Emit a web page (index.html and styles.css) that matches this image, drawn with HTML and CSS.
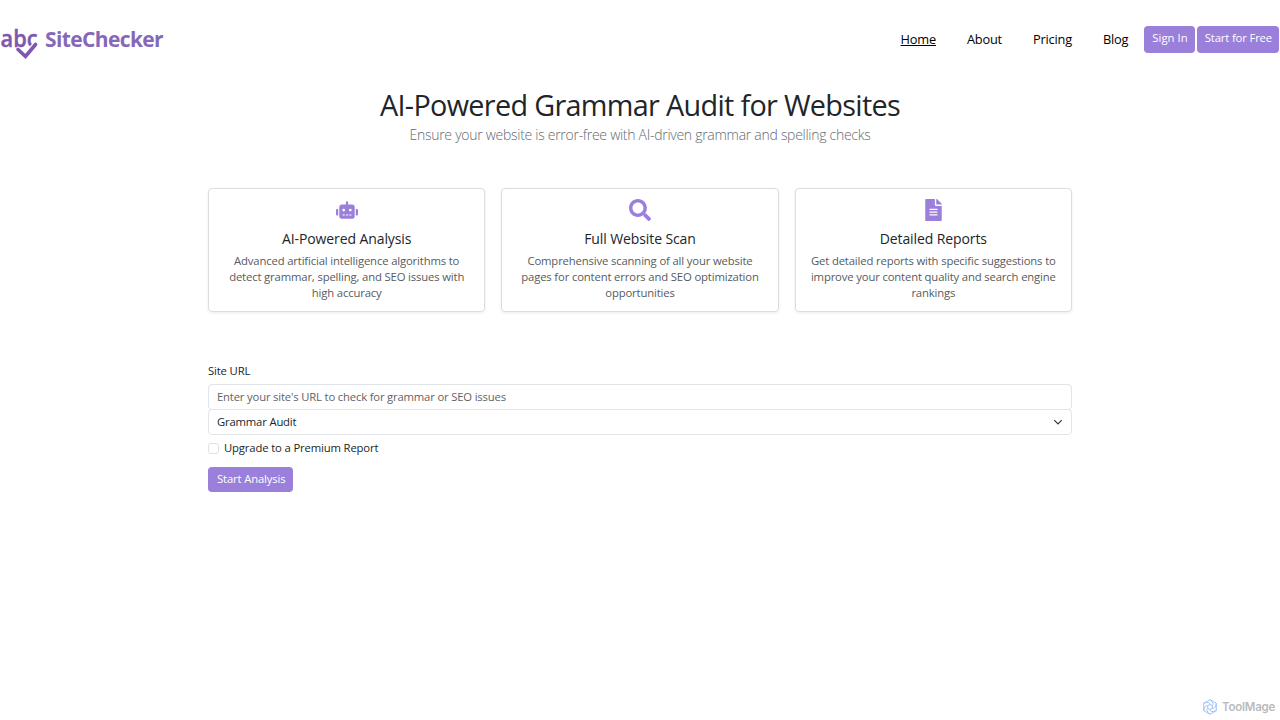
FILE: index.html
```html
<!DOCTYPE html>
<html lang="en">
<head>
  <meta charset="UTF-8" />
  <meta name="viewport" content="width=device-width, initial-scale=1.0"/>
  <title>SiteChecker</title>
  <link rel="stylesheet" href="styles.css">
</head>
<body>

  <header class="navbar">
    <a class="brand" href="#">
      <svg class="brand-icon" viewBox="0 0 38 34" width="38" height="34">
        <text class="brand-abc" x="0.500" y="21" textLength="37" lengthAdjust="spacingAndGlyphs">abc</text>
        <path class="check-gap" d="M18 24l7.500 7L36.500 18"/>
        <path class="check" d="M18 23.500l7.500 7L35.500 18.500"/>
      </svg>
      <span class="brand-name">SiteChecker</span>
    </a>
    <nav class="nav-links">
      <a class="active" href="#">Home</a>
      <a href="#">About</a>
      <a href="#">Pricing</a>
      <a href="#">Blog</a>
    </nav>
    <div class="nav-buttons">
      <a class="btn btn-signin" href="#">Sign In</a>
      <a class="btn" href="#">Start for Free</a>
    </div>
  </header>

  <main class="container">
    <h1>AI-Powered Grammar Audit for Websites</h1>
    <p class="lead">Ensure your website is error-free with AI-driven grammar and spelling checks</p>

    <div class="features">
      <div class="card">
        <svg class="icon" viewBox="0 0 640 512" width="22" height="22"><path d="M32 224h32v192H32a32 32 0 0 1-32-32V256a32 32 0 0 1 32-32zm512-48v272a64 64 0 0 1-64 64H160a64 64 0 0 1-64-64V176a80 80 0 0 1 80-80h112V32a32 32 0 0 1 64 0v64h112a80 80 0 0 1 80 80zM264 256a40 40 0 1 0-40 40 40 40 0 0 0 40-40zm-8 128h-64v32h64zm96 0h-64v32h64zm104-128a40 40 0 1 0-40 40 40 40 0 0 0 40-40zm-8 128h-64v32h64zm192-128v128a32 32 0 0 1-32 32h-32V224h32a32 32 0 0 1 32 32z"/></svg>
        <h5>AI-Powered Analysis</h5>
        <p>Advanced artificial intelligence algorithms to<br>detect grammar, spelling, and SEO issues with<br>high accuracy</p>
      </div>
      <div class="card">
        <svg class="icon" viewBox="0 0 512 512" width="22" height="22"><path d="M505 442.700L405.300 343c-4.500-4.500-10.600-7-17-7H372c27.600-35.300 44-79.700 44-128C416 93.100 322.900 0 208 0S0 93.100 0 208s93.100 208 208 208c48.300 0 92.700-16.400 128-44v16.300c0 6.400 2.500 12.500 7 17l99.700 99.700c9.400 9.400 24.600 9.400 33.900 0l28.300-28.300c9.400-9.400 9.400-24.600.1-34zM208 336c-70.700 0-128-57.200-128-128 0-70.700 57.200-128 128-128 70.700 0 128 57.200 128 128 0 70.700-57.200 128-128 128z"/></svg>
        <h5>Full Website Scan</h5>
        <p>Comprehensive scanning of all your website<br>pages for content errors and SEO optimization<br>opportunities</p>
      </div>
      <div class="card">
        <svg class="icon" viewBox="0 0 384 512" width="17" height="22"><path d="M224 136V0H24C10.700 0 0 10.700 0 24v464c0 13.300 10.700 24 24 24h336c13.300 0 24-10.700 24-24V160H248c-13.200 0-24-10.800-24-24zm64 236c0 6.600-5.400 12-12 12H108c-6.600 0-12-5.400-12-12v-8c0-6.600 5.400-12 12-12h168c6.600 0 12 5.400 12 12v8zm0-64c0 6.600-5.400 12-12 12H108c-6.600 0-12-5.400-12-12v-8c0-6.600 5.400-12 12-12h168c6.600 0 12 5.400 12 12v8zm0-72v8c0 6.600-5.400 12-12 12H108c-6.600 0-12-5.400-12-12v-8c0-6.600 5.400-12 12-12h168c6.600 0 12 5.400 12 12zm96-114.100v6.100H256V0h6.100c6.400 0 12.500 2.500 17 7l97.900 98c4.500 4.500 7 10.600 7 16.900z"/></svg>
        <h5>Detailed Reports</h5>
        <p>Get detailed reports with specific suggestions to<br>improve your content quality and search engine<br>rankings</p>
      </div>
    </div>

    <form class="audit-form">
      <label class="form-label" for="siteUrl">Site URL</label>
      <input class="form-control" type="text" id="siteUrl" placeholder="Enter your site's URL to check for grammar or SEO issues">
      <div class="select-wrap">
        <select class="form-control" id="auditType">
          <option>Grammar Audit</option>
          <option>SEO Audit</option>
        </select>
        <svg class="chevron" viewBox="0 0 16 16" width="10" height="10"><path d="M2 5l6 6 6-6"/></svg>
      </div>
      <label class="form-check">
        <input type="checkbox">
        <span>Upgrade to a Premium Report</span>
      </label>
      <button class="btn submit-btn" type="button">Start Analysis</button>
    </form>
  </main>

  <div class="watermark">
    <svg viewBox="-8 -8 16 16" width="16" height="16">
      <path d="M0-7.300l6.300 3.650v7.300L0 7.300l-6.300-3.650v-7.300z"/>
      <path d="M0-7.300Q5-3 2-1.200M6.300-3.650Q5.100 2.800 2 1.200M6.300 3.650Q.2 6 0 2.400M0 7.300Q-5 3-2 1.200M-6.300 3.650Q-5.100-2.800-2-1.200M-6.300-3.650Q-.2-6 0-2.400"/>
      <circle r="2.400"/>
    </svg>
    <span>ToolMage</span>
  </div>

</body>
</html>
```
FILE: styles.css
```css
* { margin: 0; padding: 0; box-sizing: border-box; }

body {
  height: 720px;
  overflow: hidden;
  background: #fff;
  color: #212529;
  font-family: 'Segoe UI', 'Open Sans', sans-serif;
  font-size: 11.3px;
  line-height: 16px;
  letter-spacing: -0.15px;
}

a { color: #000; text-decoration: none; }

.navbar {
  display: flex;
  align-items: flex-start;
  padding-top: 26px;
  height: 87px;
}

.brand {
  display: flex;
  margin-right: auto;
}

.brand-icon { overflow: visible; }

.brand-abc {
  font-size: 24px;
  font-weight: 600;
  letter-spacing: 0;
  fill: #7e57b0;
  stroke: #7e57b0;
  stroke-width: 0.4;
}

.check, .check-gap { fill: none; stroke: #7e57b0; stroke-width: 3.6; stroke-linecap: round; }
.check-gap { stroke: #fff; stroke-width: 7; stroke-linecap: butt; }

.brand-name {
  margin-left: 7px;
  color: #8569b8;
  font-size: 21px;
  font-weight: 700;
  line-height: 27px;
  letter-spacing: -0.62px;
}

.nav-links {
  display: flex;
  gap: 31px;
  margin-right: 16px;
  font-size: 12.8px;
  line-height: 27px;
  letter-spacing: -0.2px;
}

.nav-links .active { text-decoration: underline; }

.nav-buttons { display: flex; gap: 2px; margin-right: 1px; }

.btn {
  height: 27px;
  padding: 4px 7px 4px 8px;
  background: #9a7fdb;
  border: none;
  border-radius: 4px;
  color: #fff;
  font-family: inherit;
  font-size: 11.3px;
  line-height: 16px;
  letter-spacing: -0.15px;
}

.btn-signin { letter-spacing: 0.05px; }

.container {
  width: 864px;
  margin: auto;
}

h1 {
  font-size: 28.8px;
  font-weight: 400;
  line-height: 35px;
  text-align: center;
  letter-spacing: -0.68px;
}

.lead {
  padding-top: 2px;
  color: #636a71;
  font-size: 14px;
  font-weight: 300;
  line-height: 22px;
  text-align: center;
  letter-spacing: -0.28px;
}

.features {
  display: grid;
  grid-template-columns: repeat(3, 1fr);
  gap: 16px;
  margin-top: 42px;
}

.card {
  height: 124px;
  padding-top: 10px;
  border: 1px solid #dcdde0;
  border-radius: 4px;
  box-shadow: 0 1px 3px rgba(0,0,0,0.08);
  text-align: center;
}

.icon { display: block; margin: 0 auto; fill: #9a7fdb; }

.card h5 {
  margin-top: 9px;
  font-size: 14px;
  font-weight: 400;
  line-height: 18px;
  letter-spacing: -0.1px;
}

.card p { margin-top: 5px; color: #565b60; white-space: nowrap; }

.audit-form { margin-top: 51px; }

.form-label { display: block; margin-bottom: 5px; }

.form-control {
  display: block;
  width: 100%;
  height: 26px;
  padding: 0 8px 2px;
  background: #fff;
  border: 1px solid #e1e4e8;
  border-radius: 4px;
  color: #212529;
  font-family: inherit;
  font-size: inherit;
  letter-spacing: -0.18px;
  appearance: none;
}

.form-control::placeholder { color: #5f6469; opacity: 1; }

.select-wrap { position: relative; margin-top: -1px; }
.chevron { position: absolute; right: 9px; top: 8px; fill: none; stroke: #343a40; stroke-width: 2; }

.form-check { display: flex; align-items: center; margin-top: 5px; }

.form-check input {
  width: 11px;
  height: 11px;
  margin-right: 5px;
  border: 1px solid #dee2e6;
  border-radius: 3px;
  appearance: none;
}

.submit-btn {
  height: 25px;
  margin-top: 11px;
  padding: 3px 8px 4px 9px;
}

.watermark {
  position: absolute;
  right: 5px;
  bottom: 5px;
  display: flex;
  gap: 4px;
  color: #b9bbbd;
  font-family: Inter, sans-serif;
  font-size: 11.5px;
  font-weight: 600;
  letter-spacing: -0.25px;
}

.watermark path, .watermark circle { fill: none; stroke: #a3c3f5; stroke-width: 1; stroke-linejoin: round; }
```
